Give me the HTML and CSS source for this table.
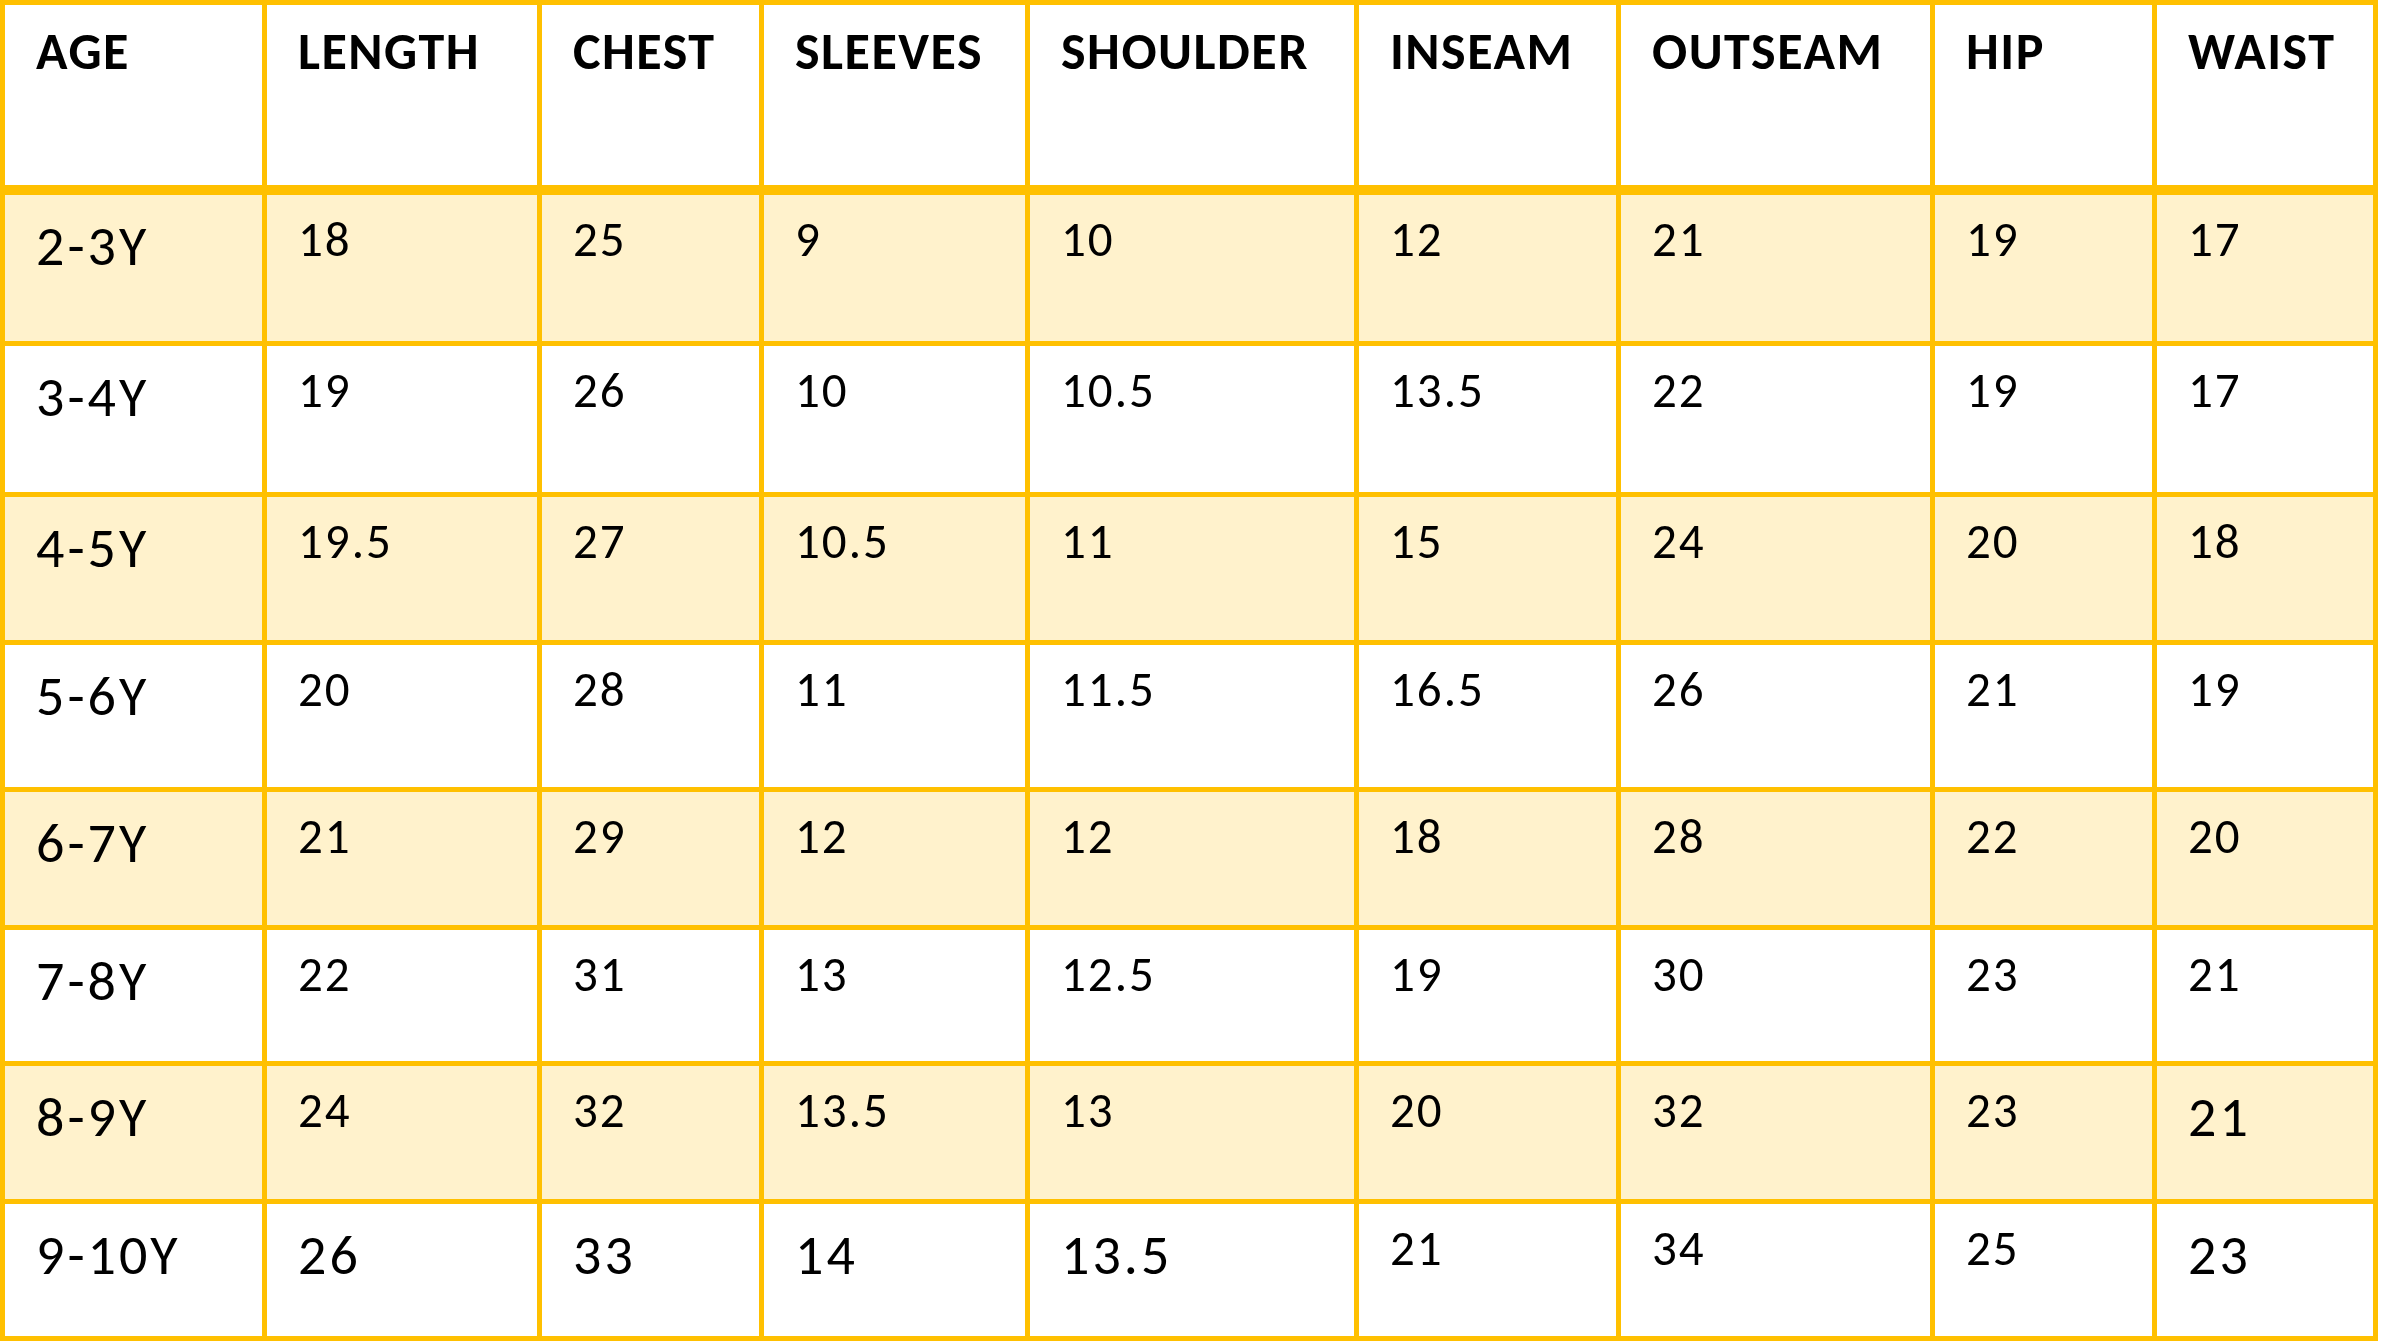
FILE: index.html
```html
<!DOCTYPE html>
<html lang="en">
<head>
<meta charset="utf-8">
<title>Size Chart</title>
<link rel="stylesheet" href="styles.css">
</head>
<body>
<div class="size-chart">
  <div class="row head">
    <div class="cell">AGE</div><div class="cell">LENGTH</div><div class="cell">CHEST</div><div class="cell">SLEEVES</div><div class="cell">SHOULDER</div><div class="cell">INSEAM</div><div class="cell">OUTSEAM</div><div class="cell">HIP</div><div class="cell">WAIST</div>
  </div>
  <div class="row alt">
    <div class="cell age">2-3Y</div><div class="cell">18</div><div class="cell">25</div><div class="cell">9</div><div class="cell">10</div><div class="cell">12</div><div class="cell">21</div><div class="cell">19</div><div class="cell">17</div>
  </div>
  <div class="row">
    <div class="cell age">3-4Y</div><div class="cell">19</div><div class="cell">26</div><div class="cell">10</div><div class="cell">10.5</div><div class="cell">13.5</div><div class="cell">22</div><div class="cell">19</div><div class="cell">17</div>
  </div>
  <div class="row alt">
    <div class="cell age">4-5Y</div><div class="cell">19.5</div><div class="cell">27</div><div class="cell">10.5</div><div class="cell">11</div><div class="cell">15</div><div class="cell">24</div><div class="cell">20</div><div class="cell">18</div>
  </div>
  <div class="row">
    <div class="cell age">5-6Y</div><div class="cell">20</div><div class="cell">28</div><div class="cell">11</div><div class="cell">11.5</div><div class="cell">16.5</div><div class="cell">26</div><div class="cell">21</div><div class="cell">19</div>
  </div>
  <div class="row alt">
    <div class="cell age">6-7Y</div><div class="cell">21</div><div class="cell">29</div><div class="cell">12</div><div class="cell">12</div><div class="cell">18</div><div class="cell">28</div><div class="cell">22</div><div class="cell">20</div>
  </div>
  <div class="row">
    <div class="cell age">7-8Y</div><div class="cell">22</div><div class="cell">31</div><div class="cell">13</div><div class="cell">12.5</div><div class="cell">19</div><div class="cell">30</div><div class="cell">23</div><div class="cell">21</div>
  </div>
  <div class="row alt">
    <div class="cell age">8-9Y</div><div class="cell">24</div><div class="cell">32</div><div class="cell">13.5</div><div class="cell">13</div><div class="cell">20</div><div class="cell">32</div><div class="cell">23</div><div class="cell lg">21</div>
  </div>
  <div class="row">
    <div class="cell age">9-10Y</div><div class="cell lg">26</div><div class="cell lg">33</div><div class="cell lg">14</div><div class="cell lg">13.5</div><div class="cell">21</div><div class="cell">34</div><div class="cell">25</div><div class="cell lg">23</div>
  </div>
</div>
</body>
</html>
```
FILE: styles.css
```css
html, body {
  margin: 0;
  padding: 0;
  background: #ffffff;
}

body {
  font-family: Carlito, Calibri, Lato, "Liberation Sans", sans-serif;
  color: #000000;
}

.size-chart {
  display: grid;
  grid-template-columns: 257px 270px 217px 261px 324px 257px 309px 217px 216px;
  grid-template-rows: 185px 146px 146px 143px 142px 133px 131px 133px 132px;
  gap: 5px;
  padding: 5px;
  background: #FFC000;
  width: max-content;
}

.row {
  display: contents;
}

.cell {
  box-sizing: border-box;
  background: #ffffff;
  padding: 15px 0 0 31px;
  font-size: 49px;
  letter-spacing: 2px;
  line-height: 1.22;
  white-space: nowrap;
}

.head .cell {
  font-weight: 700;
  font-size: 52px;
  letter-spacing: 1.5px;
  padding-top: 15px;
  border-bottom: 5px solid #FFC000;
}

.alt .cell {
  background: #FFF2CC;
}

.cell.age,
.cell.lg {
  font-size: 56px;
  letter-spacing: 3px;
  padding-top: 17px;
}
```
